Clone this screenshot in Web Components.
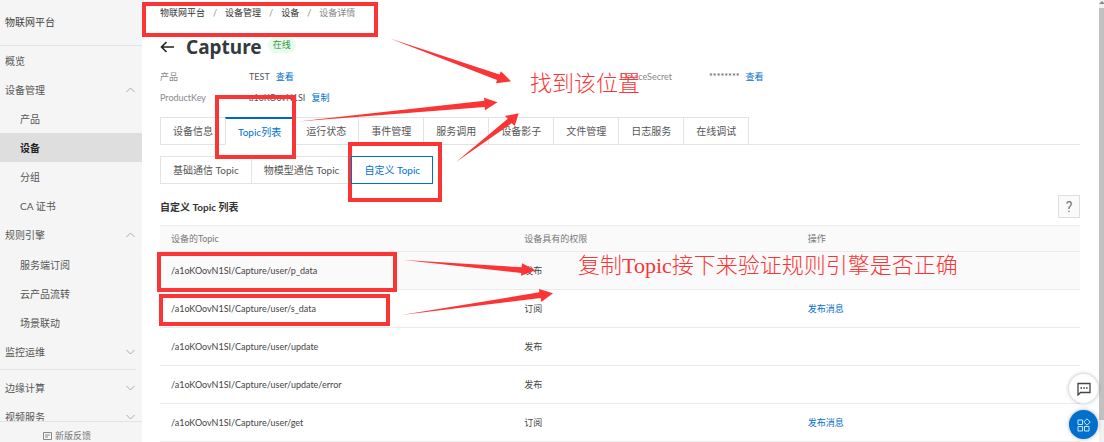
<!DOCTYPE html>
<html lang="zh-CN">
<head>
<meta charset="utf-8">
<title>物联网平台</title>
<style>
  body {
    margin: 0;
    font: 9px/16px Lato, "Noto Sans CJK SC", sans-serif;
    color: #333;
    background: #fff;
  }
</style>
</head>
<body>
<iot-app>
  <iot-sidebar slot="side"></iot-sidebar>
  <iot-breadcrumb></iot-breadcrumb>
  <device-header name="Capture" status="在线"></device-header>
  <device-info></device-info>
  <tab-bar kind="line" active="1" items="设备信息,Topic列表,运行状态,事件管理,服务调用,设备影子,文件管理,日志服务,在线调试"></tab-bar>
  <tab-bar kind="box" active="2" items="基础通信 Topic,物模型通信 Topic,自定义 Topic"></tab-bar>
  <section-title>自定义 Topic 列表</section-title>
  <topic-table></topic-table>
</iot-app>
<float-tools></float-tools>
<guide-marks></guide-marks>

<script>
class IotApp extends HTMLElement {
  constructor() {
    super();
    this.attachShadow({ mode: 'open' }).innerHTML = `
      <style>
        :host { display: flex; height: 100vh; overflow: hidden; }
        main { flex: 1; min-width: 0; padding: 5px 19px 0 18px; overflow: hidden; }
        .bar {
          flex: none; width: 5px; background: #f1f1f1;
          display: flex; flex-direction: column;
        }
        .bar svg { display: block; height: 8px; }
        .thumb { flex: 1; margin-bottom: 22px; background: #c1c1c1; }
      </style>
      <slot name="side"></slot>
      <main><slot></slot></main>
      <div class="bar">
        <svg width="5" height="8" viewBox="0 0 5 8"><path d="M0 4L3 1L5 3V4Z" fill="#888"/></svg>
        <div class="thumb"></div>
      </div>
    `;
  }
}
customElements.define('iot-app', IotApp);

class NavItem extends HTMLElement {
  connectedCallback() {
    const arrow = this.getAttribute('arrow');
    const d = arrow === 'up' ? 'M0.5 5L4.5 1L8.5 5' : 'M0.5 1L4.5 5L8.5 1';
    this.attachShadow({ mode: 'open' }).innerHTML = `
      <style>
        :host { display: block; }
        a {
          display: flex; align-items: center; justify-content: space-between;
          height: 29px; padding: 0 7px 0 5px;
          color: #555; text-decoration: none;
        }
        :host([section]) a { height: 30px; }
        :host([sub]) a { padding-left: 20px; }
        :host([current]) a { background: #dedede; color: #222; font-weight: bold; }
      </style>
      <a href="#"><slot></slot>${arrow ? `<svg width="9" height="6" viewBox="0 0 9 6"><path d="${d}" fill="none" stroke="#aaa"/></svg>` : ''}</a>
    `;
  }
}
customElements.define('nav-item', NavItem);

class IotSidebar extends HTMLElement {
  constructor() {
    super();
    this.attachShadow({ mode: 'open' }).innerHTML = `
      <style>
        :host {
          flex: none; width: 142px; background: #f5f5f5;
          display: flex; flex-direction: column;
          font-size: 10px; color: #444;
        }
        header {
          flex: none; box-sizing: border-box; height: 46px; padding: 14px 5px;
          border-bottom: 1px solid #e3e3e3;
        }
        nav { flex: 1; min-height: 0; overflow: hidden; }
        hr { margin: 2px 6px 3px 0; border: 0; border-top: 1px solid #e3e3e3; }
        footer {
          flex: none; box-sizing: border-box; height: 21px; padding-top: 8px;
          border-top: 1px solid #e3e3e3;
        }
        footer a {
          display: flex; justify-content: center; align-items: center; gap: 3px;
          padding-right: 8px; font-size: 9px; line-height: 12px; color: #777; text-decoration: none;
        }
      </style>
      <header>物联网平台</header>
      <nav>
        <nav-item>概览</nav-item>
        <nav-item arrow="up">设备管理</nav-item>
        <nav-item sub>产品</nav-item>
        <nav-item sub current>设备</nav-item>
        <nav-item sub>分组</nav-item>
        <nav-item sub>CA 证书</nav-item>
        <nav-item section arrow="up">规则引擎</nav-item>
        <nav-item sub>服务端订阅</nav-item>
        <nav-item sub>云产品流转</nav-item>
        <nav-item sub>场景联动</nav-item>
        <nav-item section arrow="down">监控运维</nav-item>
        <hr>
        <nav-item arrow="down">边缘计算</nav-item>
        <nav-item arrow="down">视频服务</nav-item>
      </nav>
      <footer>
        <a href="#"><svg width="9" height="8" viewBox="0 0 9 8"><path d="M0.5 0.5H8.5V7.5H0.5ZM2 3H7M2 5H5" fill="none" stroke="#888"/></svg>新版反馈</a>
      </footer>
    `;
  }
}
customElements.define('iot-sidebar', IotSidebar);

class IotBreadcrumb extends HTMLElement {
  constructor() {
    super();
    this.attachShadow({ mode: 'open' }).innerHTML = `
      <style>
        :host { display: block; }
        nav { display: flex; gap: 8px; color: #888; }
        a { color: #333; text-decoration: none; }
      </style>
      <nav>
        <a href="#">物联网平台</a><span>/</span>
        <a href="#">设备管理</a><span>/</span>
        <a href="#">设备</a><span>/</span>
        <span>设备详情</span>
      </nav>
    `;
  }
}
customElements.define('iot-breadcrumb', IotBreadcrumb);

class DeviceHeader extends HTMLElement {
  connectedCallback() {
    this.attachShadow({ mode: 'open' }).innerHTML = `
      <style>
        :host { display: flex; align-items: center; height: 28px; margin-top: 12px; }
        button { display: flex; padding: 0; border: 0; background: none; }
        h1 { margin: 0 6px 0 12px; font: bold 19px/28px "Noto Sans", sans-serif; color: #333a40; }
        .tag {
          margin-bottom: 4px; padding: 0 5px; border-radius: 8px;
          background: #e8fbec; color: #2d9a45;
        }
      </style>
      <button aria-label="返回">
        <svg width="14" height="12" viewBox="0 0 14 12"><path d="M14 6H1.5M6.5 1L1.5 6L6.5 11" fill="none" stroke="#222" stroke-width="1.6"/></svg>
      </button>
      <h1>${this.getAttribute('name')}</h1>
      <span class="tag">${this.getAttribute('status')}</span>
    `;
  }
}
customElements.define('device-header', DeviceHeader);

class DeviceInfo extends HTMLElement {
  constructor() {
    super();
    this.attachShadow({ mode: 'open' }).innerHTML = `
      <style>
        dl {
          display: grid; grid-template-columns: 1fr 1fr; row-gap: 5px;
          margin: 8px 0 11px;
        }
        div { display: flex; }
        dt { width: 89px; color: #888; }
        dd { display: flex; gap: 6px; margin: 0; color: #555; }
        a { color: #0070cc; text-decoration: none; }
      </style>
      <dl>
        <div><dt>产品</dt><dd>TEST <a href="#">查看</a></dd></div>
        <div><dt>DeviceSecret</dt><dd>******** <a href="#">查看</a></dd></div>
        <div><dt>ProductKey</dt><dd>a1oKOovN1SI <a href="#">复制</a></dd></div>
      </dl>
    `;
  }
}
customElements.define('device-info', DeviceInfo);

class TabBar extends HTMLElement {
  connectedCallback() {
    const active = Number(this.getAttribute('active'));
    const tabs = this.getAttribute('items').split(',').map((text, i) =>
      `<button role="tab" aria-selected="${i === active}">${text}</button>`).join('');
    this.attachShadow({ mode: 'open' }).innerHTML = `
      <style>
        :host { display: block; height: 28px; }
        :host([kind="line"]) { margin-bottom: 11px; box-shadow: inset 0 -1px #e6e6e6; }
        [role="tablist"] { display: flex; padding-left: 1px; }
        button {
          box-sizing: border-box; height: 28px; margin-left: -1px; padding: 0 12px;
          border: 1px solid #e3e3e3; background: #fff; color: #555;
          font: inherit; font-size: 10px; line-height: 16px; white-space: nowrap;
        }
        button[aria-selected="true"] { color: #0070cc; }
        :host([kind="line"]) button[aria-selected="true"] {
          border-top: 2px solid #0064c8; border-bottom-color: #fff;
        }
        :host([kind="box"]) button[aria-selected="true"] { border-color: #0070cc; z-index: 1; }
      </style>
      <div role="tablist">${tabs}</div>
    `;
  }
}
customElements.define('tab-bar', TabBar);

class SectionTitle extends HTMLElement {
  constructor() {
    super();
    this.attachShadow({ mode: 'open' }).innerHTML = `
      <style>
        :host {
          display: flex; justify-content: space-between; align-items: center;
          margin: 11px 0 7px;
        }
        h2 { margin: 0; font-size: 10px; line-height: 16px; }
        button {
          width: 22px; height: 23px; padding: 0;
          border: 1px solid #dedede; background: #fafafa; color: #777;
          font: 14px/20px Roboto, sans-serif;
        }
      </style>
      <h2><slot></slot></h2>
      <button aria-label="帮助">?</button>
    `;
  }
}
customElements.define('section-title', SectionTitle);

class TopicTable extends HTMLElement {
  constructor() {
    super();
    const rows = [
      ['p_data', '发布'],
      ['s_data', '订阅'],
      ['update', '发布'],
      ['update/error', '发布'],
      ['get', '订阅'],
    ];
    this.attachShadow({ mode: 'open' }).innerHTML = `
      <style>
        table { width: 100%; border-collapse: separate; border-spacing: 0; table-layout: fixed; }
        col.topic { width: 38.4%; }
        th, td {
          box-sizing: border-box; padding: 0 11px; text-align: left; font-weight: normal;
          border-bottom: 1px solid #ebebeb;
        }
        th { height: 27px; background: #fafafa; color: #777; border-top: 1px solid #ebebeb; }
        td { height: 38px; color: #444; }
        tbody tr:first-child td { background: #fafafa; }
        a { color: #0070cc; text-decoration: none; }
      </style>
      <table>
        <colgroup><col class="topic"><col><col></colgroup>
        <thead><tr><th>设备的Topic</th><th>设备具有的权限</th><th>操作</th></tr></thead>
        <tbody>
          ${rows.map(([name, right]) => `
            <tr>
              <td>/a1oKOovN1SI/Capture/user/${name}</td>
              <td>${right}</td>
              <td>${right === '订阅' ? '<a href="#">发布消息</a>' : ''}</td>
            </tr>`).join('')}
        </tbody>
      </table>
    `;
  }
}
customElements.define('topic-table', TopicTable);

class FloatTools extends HTMLElement {
  constructor() {
    super();
    this.attachShadow({ mode: 'open' }).innerHTML = `
      <style>
        :host {
          position: absolute; right: 6px; bottom: 3px;
          display: flex; flex-direction: column; gap: 7px;
        }
        button {
          display: flex; align-items: center; justify-content: center;
          width: 29px; height: 29px; padding: 0; border: 0; border-radius: 50%;
          background: #fff; box-shadow: 0 0 4px rgba(0, 0, 0, 0.3);
        }
        .apps { background: #0070cc; }
      </style>
      <button aria-label="咨询">
        <svg width="14" height="14" viewBox="0 0 14 14">
          <path d="M1 1.5H13V10.5H3.5L1 13Z" fill="none" stroke="#444" stroke-width="1.3"/>
          <path d="M3.5 6H5M6.3 6H7.8M9.1 6H10.6" stroke="#333" stroke-width="1.5"/>
        </svg>
      </button>
      <button class="apps" aria-label="应用">
        <svg width="14" height="14" viewBox="0 0 14 14" fill="none" stroke="#cfe6fa">
          <path d="M1 2H5.5V6.5H1ZM1 8.5H5.5V13H1ZM7.5 8.5H12V13H7.5ZM10 0.8L13.2 4L10 7.2L6.8 4Z"/>
        </svg>
      </button>
    `;
  }
}
customElements.define('float-tools', FloatTools);

// hand-drawn red marks that lie over the page
class GuideMarks extends HTMLElement {
  constructor() {
    super();
    this.attachShadow({ mode: 'open' }).innerHTML = `
      <style>
        :host {
          position: absolute; top: 0; left: 0; pointer-events: none;
          font: 300 22px/28px "Liberation Serif", "Noto Sans CJK SC", serif;
          color: #fb3535;
        }
        svg { display: block; }
        p { position: absolute; margin: 0; white-space: nowrap; }
        .place { left: 530px; top: 70px; }
        .copy { left: 578px; top: 252px; }
      </style>
      <svg width="1104" height="442" viewBox="0 0 1104 442">
        <g fill="none" stroke="#fb3535" stroke-width="4">
          <rect x="144" y="4" width="232" height="31"/>
          <rect x="217" y="97" width="77" height="60"/>
          <rect x="350" y="144" width="90" height="56"/>
          <rect x="159" y="254" width="236" height="36"/>
          <rect x="161" y="296" width="227" height="28"/>
        </g>
        <g fill="#fb3535">
          <path d="M390 38.5L499.5 74.5L501 71.3L511 81.3L496 83.3L497 80Z"/>
          <path d="M298 121.5L484.3 100.7L484 97.7L497.5 102.3L485 110.3L484.7 107Z"/>
          <path d="M456 162L507.7 118.7L505 116L518.7 113.3L514.7 126L511.7 123.3Z"/>
          <path d="M404 260L521.7 267.3L522 263.3L535.5 270.3L521 275.7L521.3 273Z"/>
          <path d="M401.5 315L539.3 292.3L539 289L553 293.3L541.3 302L540.7 298Z"/>
        </g>
      </svg>
      <p class="place">找到该位置</p>
      <p class="copy">复制Topic接下来验证规则引擎是否正确</p>
    `;
  }
}
customElements.define('guide-marks', GuideMarks);
</script>
</body>
</html>
